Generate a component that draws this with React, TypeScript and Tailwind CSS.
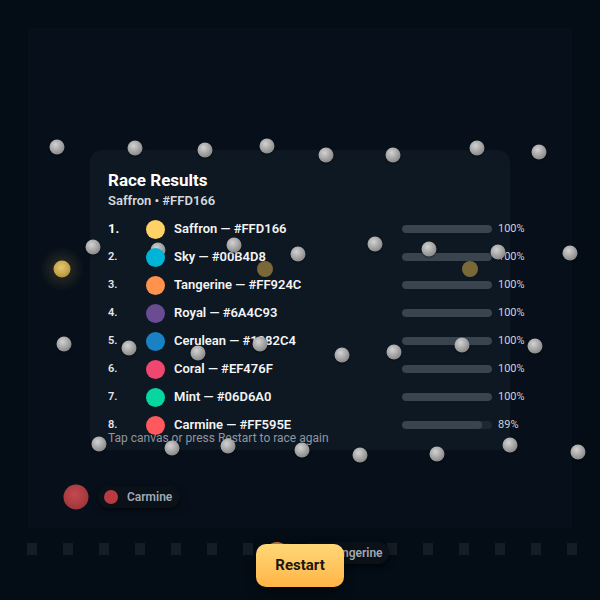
import React from 'react'

type Racer = { rank: number; name: string; hex: string; pct: number }

const racers: Racer[] = [
  { rank: 1, name: 'Saffron', hex: '#FFD166', pct: 100 },
  { rank: 2, name: 'Sky', hex: '#00B4D8', pct: 100 },
  { rank: 3, name: 'Tangerine', hex: '#FF924C', pct: 100 },
  { rank: 4, name: 'Royal', hex: '#6A4C93', pct: 100 },
  { rank: 5, name: 'Cerulean', hex: '#1982C4', pct: 100 },
  { rank: 6, name: 'Coral', hex: '#EF476F', pct: 100 },
  { rank: 7, name: 'Mint', hex: '#06D6A0', pct: 100 },
  { rank: 8, name: 'Carmine', hex: '#FF595E', pct: 89 },
]

// peg centres in page coordinates
const pegs: [number, number][] = [
  [57, 147], [135, 148], [205, 150], [267, 146], [326, 155], [393, 155], [477, 148], [539, 152],
  [93, 247], [158, 250], [234, 245], [298, 254], [375, 244], [429, 249], [498, 252], [570, 253],
  [64, 344], [129, 348], [198, 353], [260, 344], [342, 355], [394, 352], [462, 345], [535, 346],
  [99, 444], [172, 448], [228, 446], [302, 450], [360, 455], [437, 454], [510, 445], [578, 452],
]

const CANVAS_X = 28
const CANVAS_Y = 28

const Peg = ({ x, y }: { x: number; y: number }) => (
  <span
    className="absolute z-10 h-[15px] w-[15px] -translate-x-1/2 -translate-y-1/2 rounded-full bg-[radial-gradient(circle_at_40%_35%,#d2d2d2,#888_75%)] shadow-[0_1px_2px_rgba(0,0,0,0.5)]"
    style={{ left: x - CANVAS_X, top: y - CANVAS_Y }}
  />
)

const ResultRow = ({ r }: { r: Racer }) => (
  <div className="flex h-[28px] items-center">
    <span
      className={
        r.rank === 1
          ? 'w-[38px] text-[13px] font-bold text-white'
          : 'w-[38px] text-[11px] font-semibold text-[#e5e7eb]'
      }
    >
      {r.rank}.
    </span>
    <span className="relative z-20 h-[19px] w-[19px] rounded-full" style={{ backgroundColor: r.hex }} />
    <span className="ml-[9px] flex-1 text-[13px] font-semibold text-[#f3f4f6]">
      {r.name} — {r.hex}
    </span>
    <span className="h-[8px] w-[90px] overflow-hidden rounded-full bg-[#1f2831]">
      <span className="block h-full rounded-full bg-[#3a444f]" style={{ width: `${r.pct}%` }} />
    </span>
    <span className="ml-[6px] w-[12px] whitespace-nowrap text-[11px] text-[#cbd2da]">{r.pct}%</span>
  </div>
)

export default function App() {
  return (
    <div className="relative h-[600px] w-[600px] overflow-hidden bg-[#040c15] font-['Roboto',sans-serif]">
      <div className="px-[28px] pt-[28px]">
        <div className="relative h-[500px] bg-[#07101a]">
          {/* results panel */}
          <div className="absolute left-[62px] top-[122px] h-[300px] w-[420px] rounded-[12px] bg-[#0e1822] pl-[18px] pt-[18px]">
            <h2 className="text-[17px] font-bold leading-[24px] text-white">Race Results</h2>
            <p className="text-[13px] font-semibold leading-[18px] text-[#d3d8de]">Saffron • #FFD166</p>
            <div className="mt-[5px] flex flex-col">
              {racers.map((r) => (
                <ResultRow key={r.rank} r={r} />
              ))}
            </div>
            <p className="-mt-[9px] text-[12px] leading-[16px] text-[#8e96a0]">
              Tap canvas or press Restart to race again
            </p>
          </div>

          {pegs.map(([x, y], i) => (
            <Peg key={i} x={x} y={y} />
          ))}

          {/* racing balls */}
          <span
            className="absolute z-10 h-[44px] w-[44px] -translate-x-1/2 -translate-y-1/2 rounded-full bg-[radial-gradient(circle,rgba(200,165,72,0.22),rgba(200,165,72,0)_70%)]"
            style={{ left: 62 - CANVAS_X, top: 269 - CANVAS_Y }}
          />
          <span
            className="absolute z-10 h-[17px] w-[17px] -translate-x-1/2 -translate-y-1/2 rounded-full bg-[radial-gradient(circle_at_45%_40%,#e6c870,#b8943c_75%)]"
            style={{ left: 62 - CANVAS_X, top: 269 - CANVAS_Y }}
          />
          <span
            className="absolute z-10 h-[16px] w-[16px] -translate-x-1/2 -translate-y-1/2 rounded-full bg-[#7a6838]"
            style={{ left: 265 - CANVAS_X, top: 269 - CANVAS_Y }}
          />
          <span
            className="absolute z-10 h-[16px] w-[16px] -translate-x-1/2 -translate-y-1/2 rounded-full bg-[#7a6838]"
            style={{ left: 470 - CANVAS_X, top: 269 - CANVAS_Y }}
          />

          {/* carmine label */}
          <span
            className="absolute z-10 h-[25px] w-[25px] -translate-x-1/2 -translate-y-1/2 rounded-full bg-[radial-gradient(circle_at_45%_40%,#c24a4f,#a0353a_75%)]"
            style={{ left: 76 - CANVAS_X, top: 497 - CANVAS_Y }}
          />
          <div className="absolute left-[70px] top-[458px] z-10 flex h-[22px] items-center gap-[9px] rounded-full bg-[#0a1119] pl-[6px] pr-[8px] shadow-[0_2px_6px_rgba(0,0,0,0.6)]">
            <span className="h-[14px] w-[14px] rounded-full bg-[#b93b41]" />
            <span className="text-[12px] font-semibold text-[#a3a9b1]">Carmine</span>
          </div>

          {/* tangerine label (mostly under the button) */}
          <span
            className="absolute z-10 h-[24px] w-[24px] -translate-x-1/2 -translate-y-1/2 rounded-full bg-[#c77a3e]"
            style={{ left: 277 - CANVAS_X, top: 554 - CANVAS_Y }}
          />
          <div className="absolute left-[272px] top-[514px] z-10 flex h-[22px] items-center gap-[9px] rounded-full bg-[#0a1119] pl-[6px] pr-[6px] shadow-[0_2px_6px_rgba(0,0,0,0.6)]">
            <span className="h-[14px] w-[14px] rounded-full bg-[#c77a3e]" />
            <span className="text-[12px] font-semibold text-[#a3a9b1]">Tangerine</span>
          </div>
        </div>
      </div>

      {/* finish slots */}
      <div className="mt-[15px] flex gap-[26px] pl-[27px]">
        {Array.from({ length: 16 }).map((_, i) => (
          <span key={i} className="h-[12px] w-[10px] bg-[#141c26]" />
        ))}
      </div>

      <button
        type="button"
        className="absolute left-[256px] top-[544px] z-30 flex h-[43px] w-[88px] items-center justify-center rounded-[10px] bg-gradient-to-b from-[#ffd877] to-[#ffb445] text-[15px] font-bold text-[#1c1710] shadow-[0_4px_12px_rgba(0,0,0,0.45)]"
      >
        Restart
      </button>
    </div>
  )
}
